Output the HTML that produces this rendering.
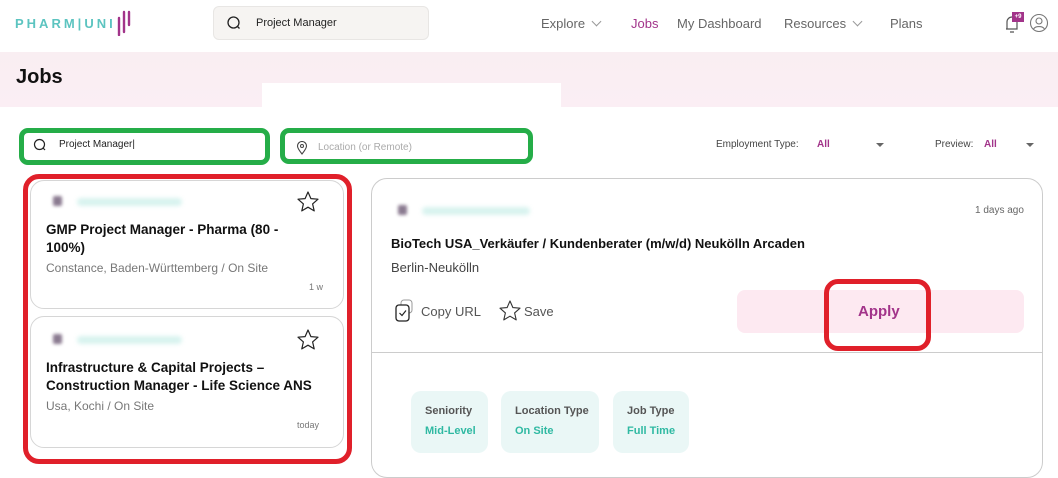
<!DOCTYPE html>
<html><head><meta charset="utf-8"><style>
*{box-sizing:border-box;margin:0;padding:0}
body{width:1058px;height:466px;overflow:hidden;background:#fff;font-family:"Liberation Sans",sans-serif;color:#222;position:relative}
.a{position:absolute}
.nav{font-size:13px;color:#666;top:16px}
.chev{display:inline-block;width:7px;height:7px;border-right:1px solid #999;border-bottom:1px solid #999;transform:rotate(45deg);margin-left:8px;position:relative;top:-3px}
.card{background:#fff;border:1px solid #d6d6d6;border-radius:14px}
.blur{background:#d8f3ef;filter:blur(2px);height:8px;border-radius:4px}
.logo{width:9px;height:10px;background:#8a7a90;filter:blur(1.5px);border-radius:2px}
.t{font-weight:bold;font-size:13.5px;color:#111;line-height:18px}
.g{font-size:12px;color:#777}
.pill{background:#eaf7f6;border-radius:10px;top:391px;height:62px;font-size:11px;padding:14px 0 0 14px}
.pill b{display:block;color:#555;margin-bottom:8px}
.pill i{font-style:normal;font-weight:bold;color:#2fb9a2}
</style></head><body>
<!-- header -->
<div class="a" style="left:15px;top:16px;font-weight:bold;font-size:13px;letter-spacing:3px;color:#5cc4c0">PHARM<span style="color:#5cc4c0">|</span>UNI</div>
<svg class="a" style="left:116px;top:8px" width="18" height="28"><path d="M3 10V27M8 4V24M13 4V17" stroke="#a2348a" stroke-width="2.4" fill="none" stroke-linecap="round"/></svg>
<div class="a" style="left:213px;top:6px;width:216px;height:34px;background:#f6f4f2;border:1px solid #e8e6e4;border-radius:6px"></div>
<svg class="a" style="left:226px;top:15px" width="16" height="16"><circle cx="7.5" cy="7.5" r="5.5" stroke="#222" stroke-width="1.3" fill="none"/><path d="M11.5 11.5l2 2" stroke="#222" stroke-width="1.3"/></svg>
<div class="a" style="left:256px;top:17px;font-size:11px;color:#222">Project Manager</div>
<div class="a nav" style="left:541px">Explore<span class="chev"></span></div>
<div class="a nav" style="left:631px;color:#a2348a">Jobs</div>
<div class="a nav" style="left:677px">My Dashboard</div>
<div class="a nav" style="left:784px">Resources<span class="chev"></span></div>
<div class="a nav" style="left:890px">Plans</div>
<svg class="a" style="left:1004px;top:12px" width="16" height="22"><path d="M3 17V10a5 5 0 0110 0v7H2M6 20h4" stroke="#555" stroke-width="1.2" fill="none"/></svg>
<div class="a" style="left:1012px;top:12px;width:12px;height:10px;background:#a2348a;color:#fff;font-size:6px;font-weight:bold;text-align:center;line-height:10px">+9</div>
<svg class="a" style="left:1029px;top:13px" width="20" height="20"><circle cx="10" cy="10" r="8.5" stroke="#777" stroke-width="1.1" fill="none"/><circle cx="10" cy="8" r="3" stroke="#777" stroke-width="1.1" fill="none"/><path d="M4.5 16a6 4 0 0111 0" stroke="#777" stroke-width="1.1" fill="none"/></svg>
<!-- band -->
<div class="a" style="left:0;top:52px;width:1058px;height:55px;background:linear-gradient(#f9eef2,#fbeef4)"></div>
<div class="a" style="left:262px;top:83px;width:299px;height:24px;background:#fff"></div>
<div class="a" style="left:16px;top:66px;font-size:20px;font-weight:900;color:#111">Jobs</div>
<!-- filters -->
<div class="a" style="left:19px;top:128px;width:251px;height:37px;border:5px solid #25ad48;border-radius:9px"></div>
<svg class="a" style="left:33px;top:138px" width="14" height="14"><circle cx="6.5" cy="6.5" r="5" stroke="#222" stroke-width="1.2" fill="none"/><path d="M10 10l2 2" stroke="#222" stroke-width="1.2"/></svg>
<div class="a" style="left:59px;top:139px;font-size:10px;color:#222">Project Manager|</div>
<div class="a" style="left:280px;top:128px;width:253px;height:36px;border:5px solid #25ad48;border-radius:9px"></div>
<svg class="a" style="left:296px;top:141px" width="12" height="14"><path d="M6 13C2 8 1.5 6.5 1.5 5a4.5 4.5 0 019 0c0 1.5-.5 3-4.5 8z" stroke="#444" stroke-width="1.1" fill="none"/><circle cx="6" cy="5" r="1.5" stroke="#444" fill="none"/></svg>
<div class="a" style="left:318px;top:142px;font-size:10px;color:#aaa">Location (or Remote)</div>
<div class="a" style="left:716px;top:139px;font-size:10px;color:#444">Employment Type:</div>
<div class="a" style="left:817px;top:139px;font-size:10px;color:#a2348a;font-weight:bold">All</div>
<div class="a" style="left:876px;top:143px;border:4px solid transparent;border-top:4px solid #666"></div>
<div class="a" style="left:935px;top:139px;font-size:10px;color:#444">Preview:</div>
<div class="a" style="left:984px;top:139px;font-size:10px;color:#a2348a;font-weight:bold">All</div>
<div class="a" style="left:1026px;top:143px;border:4px solid transparent;border-top:4px solid #666"></div>
<!-- left list -->
<div class="a card" style="left:30px;top:180px;width:314px;height:129px"></div>
<div class="a card" style="left:30px;top:316px;width:314px;height:132px"></div>
<div class="a logo" style="left:53px;top:196px"></div><div class="a blur" style="left:77px;top:198px;width:105px"></div>
<div class="a logo" style="left:53px;top:334px"></div><div class="a blur" style="left:77px;top:336px;width:105px"></div>
<svg class="a" style="left:296px;top:190px" width="24" height="24"><path d="M12 2l2.9 6.6 7.1.6-5.4 4.7 1.6 7L12 17.2 5.8 20.9l1.6-7L2 9.2l7.1-.6z" stroke="#222" stroke-width="1.2" fill="none" stroke-linejoin="round"/></svg>
<svg class="a" style="left:296px;top:328px" width="24" height="24"><path d="M12 2l2.9 6.6 7.1.6-5.4 4.7 1.6 7L12 17.2 5.8 20.9l1.6-7L2 9.2l7.1-.6z" stroke="#222" stroke-width="1.2" fill="none" stroke-linejoin="round"/></svg>
<div class="a t" style="left:46px;top:221px;width:270px">GMP Project Manager - Pharma (80 - 100%)</div>
<div class="a g" style="left:46px;top:261px">Constance, Baden-Württemberg / On Site</div>
<div class="a" style="left:309px;top:282px;font-size:9px;color:#777">1 w</div>
<div class="a t" style="left:46px;top:359px;width:290px">Infrastructure &amp; Capital Projects – Construction Manager - Life Science ANS</div>
<div class="a g" style="left:46px;top:399px">Usa, Kochi / On Site</div>
<div class="a" style="left:297px;top:420px;font-size:9px;color:#777">today</div>
<div class="a" style="left:23px;top:174px;width:329px;height:290px;border:5px solid #e0202a;border-radius:16px"></div>
<!-- right -->
<div class="a" style="left:371px;top:178px;width:672px;height:300px;border:1px solid #ccc;border-radius:16px"></div>
<div class="a" style="left:372px;top:352px;width:670px;height:1px;background:#ccc"></div>
<div class="a logo" style="left:398px;top:205px"></div><div class="a blur" style="left:422px;top:207px;width:108px"></div>
<div class="a" style="left:975px;top:205px;font-size:10px;color:#666">1 days ago</div>
<div class="a" style="left:391px;top:236px;font-size:13px;font-weight:bold;color:#111">BioTech USA_Verkäufer / Kundenberater (m/w/d) Neukölln Arcaden</div>
<div class="a" style="left:391px;top:260px;font-size:13px;color:#444">Berlin-Neukölln</div>
<svg class="a" style="left:394px;top:299px" width="24" height="24"><rect x="7" y="1" width="11" height="13" rx="3" stroke="#999" fill="none"/><rect x="2" y="6" width="13" height="16" rx="3" stroke="#222" stroke-width="1.3" fill="#fff"/><path d="M5.5 14l2.5 2.5 4-5" stroke="#222" stroke-width="1.2" fill="none"/></svg>
<div class="a" style="left:421px;top:304px;font-size:13px;color:#555">Copy URL</div>
<svg class="a" style="left:498px;top:299px" width="24" height="24"><path d="M12 2l2.9 6.6 7.1.6-5.4 4.7 1.6 7L12 17.2 5.8 20.9l1.6-7L2 9.2l7.1-.6z" stroke="#333" stroke-width="1.1" fill="none" stroke-linejoin="round"/></svg>
<div class="a" style="left:524px;top:304px;font-size:13px;color:#555">Save</div>
<div class="a" style="left:737px;top:290px;width:287px;height:43px;background:#fde9f1;border-radius:8px"></div>
<div class="a" style="left:858px;top:303px;font-size:15px;font-weight:bold;color:#a2348a">Apply</div>
<div class="a" style="left:824px;top:279px;width:107px;height:72px;border:5px solid #e0202a;border-radius:14px"></div>
<div class="a pill" style="left:411px;width:77px"><b>Seniority</b><i>Mid-Level</i></div>
<div class="a pill" style="left:501px;width:98px"><b>Location Type</b><i>On Site</i></div>
<div class="a pill" style="left:613px;width:76px"><b>Job Type</b><i>Full Time</i></div>
</body></html>
